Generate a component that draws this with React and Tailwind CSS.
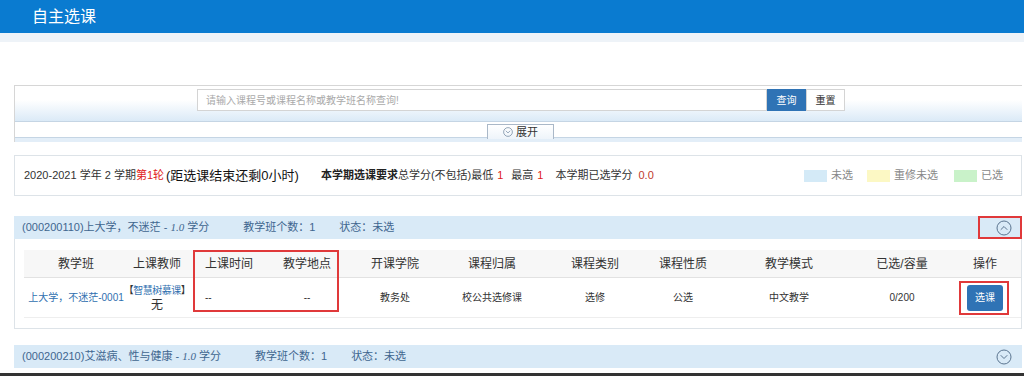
import React from 'react';

const COLS = [
  { label: '教学班', w: 'w-[104px]' },
  { label: '上课教师', w: 'w-[58px]' },
  { label: '上课时间', w: 'w-[82px]', left: true },
  { label: '教学地点', w: 'w-[78px]' },
  { label: '开课学院', w: 'w-[98px]' },
  { label: '课程归属', w: 'w-[96px]' },
  { label: '课程类别', w: 'w-[110px]' },
  { label: '课程性质', w: 'w-[66px]' },
  { label: '教学模式', w: 'w-[146px]' },
  { label: '已选/容量', w: 'w-[80px]' },
  { label: '操作', w: 'w-[70px]', op: true },
];

const ChevronCircle = ({ up, className = 'w-[16px] h-[16px]' }) => (
  <svg className={className} viewBox="0 0 16 16" fill="none" stroke="#5b7590" strokeWidth="1">
    <circle cx="8" cy="8" r="7" />
    {up ? (
      <path d="M5 9.5 L8 6.5 L11 9.5" strokeLinecap="round" strokeLinejoin="round" />
    ) : (
      <path d="M5 6.5 L8 9.5 L11 6.5" strokeLinecap="round" strokeLinejoin="round" />
    )}
  </svg>
);

const CourseHeader = ({ code, name, up, boxed }) => (
  <div className="relative flex items-center gap-[34px] h-[23px] bg-[#d9eaf7] text-[11px] text-[#3f668f] pl-[8px] whitespace-nowrap">
    <span>
      ({code}){name} - <i className="font-['Liberation_Serif',serif]">1.0</i> 学分
    </span>
    <span>教学班个数：1</span>
    <span className="-ml-[10px]">状态：未选</span>
    <div className="ml-auto mr-[10px] flex items-center">
      <ChevronCircle up={up} />
    </div>
    {boxed && (
      <div className="absolute right-0 top-0 w-[44px] h-[23px] border-2 border-[#e0393a]" />
    )}
  </div>
);

export default function App() {
  return (
    <div className="w-[1024px] h-[376px] overflow-hidden bg-white font-['Liberation_Sans','Noto_Sans_CJK_SC',sans-serif] text-[#333]">
      {/* top bar */}
      <div className="h-[33px] bg-[#0a7bd0] flex items-center pl-[32px]">
        <span className="text-white text-[16px]">自主选课</span>
      </div>
      <div className="h-[9px] bg-[#eef3f8]" />

      {/* search panel */}
      <div className="mt-[43px] ml-[14px] mr-[2px] border-t border-l border-[#d6d6d6]">
        <div className="h-[35px] bg-gradient-to-b from-white from-40% to-[#dbeaf7] flex items-start pt-[3px] pl-[182px]">
          <div className="w-[570px] h-[22px] border border-[#d4d4d4] bg-white flex items-center pl-[8px] text-[10px] text-[#aaa]">
            请输入课程号或课程名称或教学班名称查询!
          </div>
          <button className="w-[39px] h-[22px] bg-[#2f73b5] text-white text-[10px]">查询</button>
          <button className="w-[39px] h-[22px] bg-white border border-[#d4d4d4] text-[10px] text-[#333]">重置</button>
        </div>
        <div className="h-[17px] border-t border-b border-[#c5d5e4] bg-white flex justify-center">
          <div className="mt-[2px] ml-[4px] w-[67px] h-[15px] -mb-px border-l border-r border-t border-[#aab8c8] bg-gradient-to-b from-white to-[#eef4fa] flex items-center justify-center gap-[3px] text-[11px] text-[#333]">
            <ChevronCircle className="w-[10px] h-[10px]" />
            展开
          </div>
        </div>
        <div className="h-[4px] bg-[#e3eef8]" />
      </div>

      {/* info panel */}
      <div className="mt-[13px] ml-[14px] mr-[2px] h-[41px] border border-[#dde3e8] flex items-center pl-[9px] text-[11px] whitespace-nowrap">
        <span className="text-[#333]">2020-2021 学年 2 学期</span>
        <span className="text-[#e02020]">第1轮</span>
        <span className="text-[13px] text-[#111] ml-[2px]">(距选课结束还剩0小时)</span>
        <span className="ml-[22px] font-bold text-[#222]">本学期选课要求</span>
        <span>总学分(不包括)最低</span>
        <span className="text-[#e02020] ml-[4px]">1</span>
        <span className="ml-[8px]">最高</span>
        <span className="text-[#e02020] ml-[4px]">1</span>
        <span className="ml-[12px]">本学期已选学分</span>
        <span className="text-[#c0392b] ml-[6px]">0.0</span>
        <div className="ml-auto mr-[18px] flex items-center text-[#888]">
          <span className="w-[23px] h-[12px] bg-[#d4eaf7]" />
          <span className="ml-[4px]">未选</span>
          <span className="ml-[14px] w-[23px] h-[12px] bg-[#fcf8c4]" />
          <span className="ml-[4px]">重修未选</span>
          <span className="ml-[16px] w-[23px] h-[12px] bg-[#c9f2c9]" />
          <span className="ml-[4px]">已选</span>
        </div>
      </div>

      {/* course 1 */}
      <div className="mt-[20px] ml-[14px] mr-[2px]">
        <CourseHeader code="000200110" name="上大学，不迷茫" up boxed />
        <div className="relative h-[90px] border-l border-r border-b border-[#dde3e8] pt-[11px] pl-[9px]">
          <div className="flex h-[28px] bg-[#f7f7f7] border-b border-[#e2e2e2] text-[12px] text-[#333]">
            {COLS.map(c => (
              <div
                key={c.label}
                className={`${c.w} flex items-center ${c.left ? 'pl-[19px]' : c.op ? 'justify-center pl-[16px]' : 'justify-center'}`}
              >
                {c.label}
              </div>
            ))}
          </div>
          <div className="flex h-[40px] border-b border-[#eee] text-[10px] text-[#333] whitespace-nowrap">
            <div className="w-[104px] flex items-center justify-center text-[#2f6faf]">上大学，不迷茫-0001</div>
            <div className="w-[58px] flex flex-col items-center justify-center leading-[14px]">
              <span className="tracking-[-0.5px]">【<span className="text-[#2f6faf]">智慧树慕课</span>】</span>
              <span className="text-[12px]">无</span>
            </div>
            <div className="w-[82px] flex items-center pl-[19px]">--</div>
            <div className="w-[78px] flex items-center justify-center">--</div>
            <div className="w-[98px] flex items-center justify-center">教务处</div>
            <div className="w-[96px] flex items-center justify-center">校公共选修课</div>
            <div className="w-[110px] flex items-center justify-center">选修</div>
            <div className="w-[66px] flex items-center justify-center">公选</div>
            <div className="w-[146px] flex items-center justify-center">中文教学</div>
            <div className="w-[80px] flex items-center justify-center">0/200</div>
            <div className="w-[70px] flex items-center justify-center pl-[16px]">
              <button className="relative w-[36px] h-[26px] rounded-[3px] bg-[#2f73b5] text-white text-[10px]">
                选课
                <span className="absolute -left-[8px] -top-[4px] w-[50px] h-[34px] border-2 border-[#e0393a]" />
              </button>
            </div>
          </div>
          <div className="absolute left-[178px] top-[11px] w-[146px] h-[62px] border-2 border-[#e0393a]" />
        </div>
      </div>

      {/* course 2 */}
      <div className="mt-[16px] ml-[14px] mr-[2px]">
        <CourseHeader code="000200210" name="艾滋病、性与健康" />
      </div>

      <div className="mt-[5px] h-[3px] bg-[#333]" />
    </div>
  );
}
